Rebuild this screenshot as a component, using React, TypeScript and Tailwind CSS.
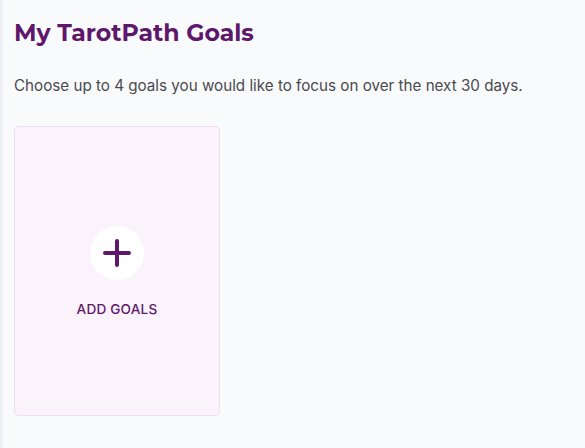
export default function App() {
  return (
    <div className="flex min-h-[448px] bg-[#f9fafc]">
      {/* sidebar edge */}
      <div className="w-[3px] shrink-0 bg-[#eff0f4]" />

      <main className="flex-1 px-[11px] pt-[18px]">
        <h1 className="font-['Montserrat','Lato',sans-serif] text-[23.6px] font-bold leading-[30px] text-[#5e176a]">
          My TarotPath Goals
        </h1>
        <p className="mt-[28px] font-['Inter',sans-serif] text-[15.2px] leading-[20px] text-[#494a4f]">
          Choose up to 4 goals you would like to focus on over the next 30 days.
        </p>

        {/* Goal slots */}
        <div className="mt-[30px] grid grid-cols-[206px]">
          <button className="flex h-[290px] flex-col items-center justify-center rounded-[5px] border border-[#f1ddf1] bg-[#fbf3fb] pt-[4px]">
            <span className="flex h-[54px] w-[54px] items-center justify-center rounded-full bg-white">
              <svg width="28" height="28" viewBox="0 0 28 28" fill="none">
                <path d="M14 2v24M2 14h24" stroke="#5e176a" strokeWidth="4" strokeLinecap="round" />
              </svg>
            </span>
            <span className="mt-[19px] font-['Inter',sans-serif] text-[13.6px] font-medium tracking-[0.2px] text-[#5e176a]">
              ADD GOALS
            </span>
          </button>
        </div>
      </main>
    </div>
  );
}
